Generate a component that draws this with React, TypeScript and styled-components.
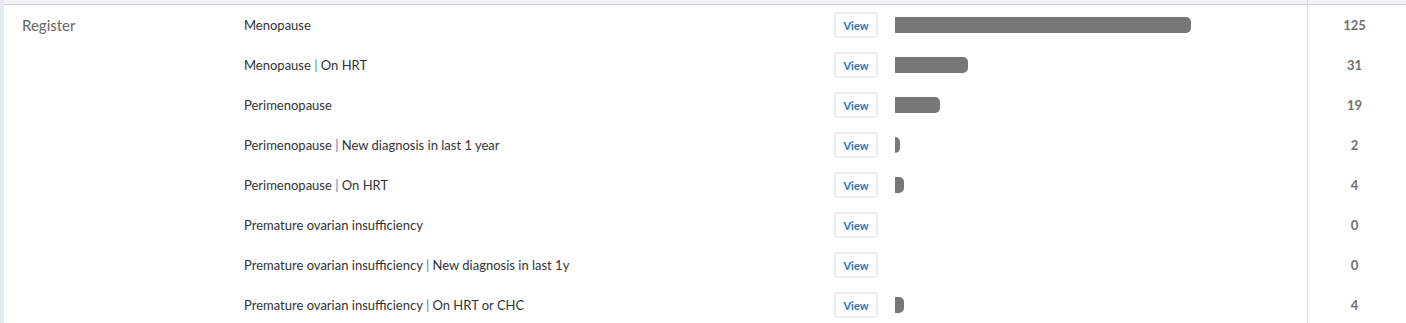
import React from 'react';
import styled, { createGlobalStyle } from 'styled-components';

const GlobalStyle = createGlobalStyle`
  html, body {
    margin: 0;
    padding: 0;
    background: #ffffff;
    font-family: Lato, "Liberation Sans", sans-serif;
  }
`;

const Page = styled.div`
  width: 1406px;
  height: 323px;
  overflow: hidden;
  border-left: 4px solid #e4e9ef;
  box-sizing: border-box;
`;

const TopBand = styled.div`
  height: 4px;
  background: #f2f3f5;
  border-bottom: 1px solid #cfd2d6;
  display: flex;
  justify-content: flex-end;
`;

const TopDivider = styled.div`
  width: 98px;
  border-left: 1px solid #dcdcdc;
`;

const Table = styled.div`
  display: flex;
`;

const GroupCell = styled.div`
  width: 240px;
  padding: 10px 0 0 18px;
  box-sizing: border-box;
  font-size: 15px;
  color: #666666;
  line-height: 20px;
`;

const Rows = styled.div`
  flex: 1;
  display: flex;
  flex-direction: column;
`;

const Row = styled.div`
  display: flex;
  align-items: center;
  height: 40px;
`;

const Label = styled.div`
  width: 590px;
  font-size: 13px;
  color: #333333;
`;

const Sep = styled.span`
  color: #4f7fae;
`;

const ViewButton = styled.button`
  width: 44px;
  height: 26px;
  padding: 0;
  border: 2px solid #e8edf2;
  border-radius: 3px;
  background: #ffffff;
  color: #2c6db5;
  font-family: inherit;
  font-size: 11px;
  font-weight: 700;
  margin-right: 17px;
`;

const BarArea = styled.div`
  width: 412px;
  height: 40px;
  display: flex;
  align-items: center;
`;

const Bar = styled.div`
  height: 16px;
  background: #777777;
  border-radius: 0 5px 5px 0;
`;

const Count = styled.div`
  width: 98px;
  height: 40px;
  border-left: 1px solid #dcdcdc;
  display: flex;
  align-items: center;
  justify-content: center;
  font-size: 13px;
  font-weight: 700;
  color: #707070;
  padding-right: 4px;
  box-sizing: border-box;
`;

const rows: { name: string[]; value: number }[] = [
  { name: ['Menopause'], value: 125 },
  { name: ['Menopause', 'On HRT'], value: 31 },
  { name: ['Perimenopause'], value: 19 },
  { name: ['Perimenopause', 'New diagnosis in last 1 year'], value: 2 },
  { name: ['Perimenopause', 'On HRT'], value: 4 },
  { name: ['Premature ovarian insufficiency'], value: 0 },
  { name: ['Premature ovarian insufficiency', 'New diagnosis in last 1y'], value: 0 },
  { name: ['Premature ovarian insufficiency', 'On HRT or CHC'], value: 4 },
];

const maxWidth = 296;
const maxValue = 125;

export default function App() {
  return (
    <Page>
      <GlobalStyle />
      <TopBand>
        <TopDivider />
      </TopBand>
      <Table>
        <GroupCell>Register</GroupCell>
        <Rows>
          {rows.map((r) => (
            <Row key={r.name.join('|')}>
              <Label>
                {r.name[0]}
                {r.name[1] && (
                  <>
                    {' '}
                    <Sep>|</Sep> {r.name[1]}
                  </>
                )}
              </Label>
              <ViewButton>View</ViewButton>
              <BarArea>
                {r.value > 0 && (
                  <Bar style={{ width: Math.max(5, (r.value / maxValue) * maxWidth) }} />
                )}
              </BarArea>
              <Count>{r.value}</Count>
            </Row>
          ))}
        </Rows>
      </Table>
    </Page>
  );
}
